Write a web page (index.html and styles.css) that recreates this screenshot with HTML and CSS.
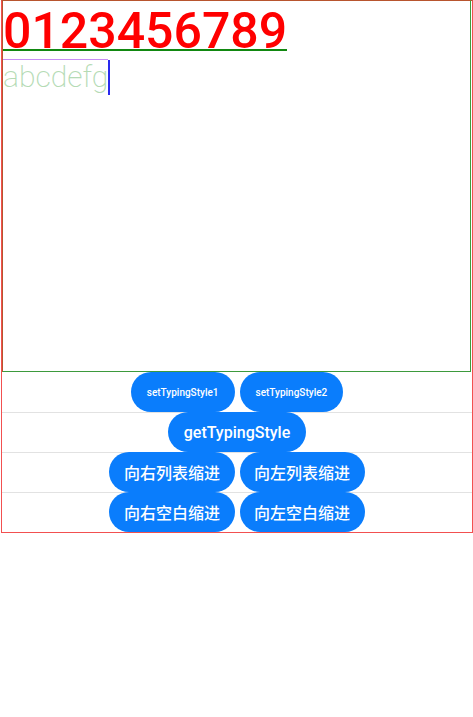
FILE: index.html
```html
<!DOCTYPE html>
<html>
<head>
<meta charset="utf-8">
<link rel="stylesheet" href="styles.css">
</head>
<body>
<div class="outer">
  <div class="editor">
    <div class="line1"><span class="digits">0123456789</span></div>
    <div class="line2"><span class="letters">abcdefg</span><span class="caret"></span></div>
  </div>
  <div class="row">
    <button class="btn small">setTypingStyle1</button>
    <button class="btn small">setTypingStyle2</button>
  </div>
  <div class="row divided">
    <button class="btn">getTypingStyle</button>
  </div>
  <div class="row divided">
    <button class="btn cjk">向右列表缩进</button>
    <button class="btn cjk">向左列表缩进</button>
  </div>
  <div class="row divided">
    <button class="btn cjk">向右空白缩进</button>
    <button class="btn cjk">向左空白缩进</button>
  </div>
</div>
</body>
</html>
```
FILE: styles.css
```css
html, body {
  margin: 0;
  padding: 0;
  background: #ffffff;
}
body {
  font-family: Roboto, "Noto Sans CJK SC", sans-serif;
}
.outer {
  margin-left: 1px;
  width: 470px;
  border: 1px solid #f25050;
  border-top-color: #b8552e;
}
.editor {
  box-sizing: border-box;
  width: 469px;
  height: 372px;
  margin-top: -1px;
  border: 1px solid #3d9a3d;
  border-top-color: #b8552e;
  border-left-color: #b8552e;
}
.line1 {
  display: flex;
  padding-top: 12px;
}
.digits {
  color: #ff0000;
  font-size: 50px;
  font-weight: 500;
  line-height: 36px;
  border-bottom: 2px solid #118811;
}
.line2 {
  display: flex;
  align-items: stretch;
  height: 36px;
  margin-top: 8px;
}
.letters {
  color: #b5dbb5;
  font-size: 30px;
  font-weight: 200;
  line-height: 34px;
  border-top: 1px solid #c78cf5;
}
.caret {
  width: 2px;
  background: #2a2aee;
  margin-top: 1px;
}
.row {
  display: flex;
  justify-content: center;
  gap: 5px;
  height: 40px;
}
.divided {
  border-top: 1px solid #e2e2e2;
  height: 39px;
}
.btn {
  border: none;
  background: #0a7dfc;
  color: #ffffff;
  border-radius: 20px;
  height: 40px;
  padding: 0 16px;
  font-family: Roboto, "Noto Sans CJK SC", sans-serif;
  font-size: 16px;
  font-weight: 500;
  margin: 0;
}
.divided .btn {
  margin-top: -1px;
}
.cjk {
  padding: 0 14.5px;
}
.small {
  font-size: 10px;
}
```
